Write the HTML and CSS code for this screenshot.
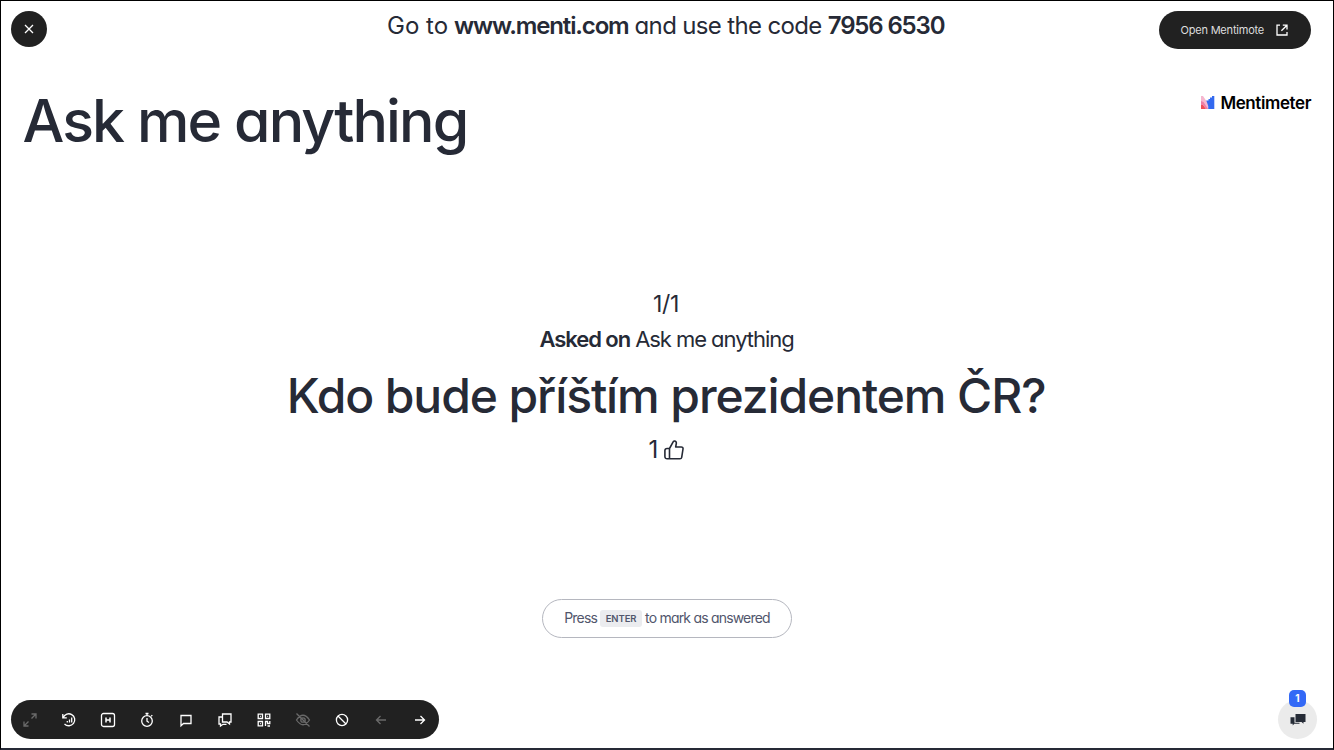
FILE: index.html
```html
<!DOCTYPE html>
<html lang="en">
<head>
<meta charset="utf-8">
<title>Ask me anything</title>
<link rel="stylesheet" href="styles.css">
</head>
<body>
<div class="screen">
  <header class="top">
    <button class="close" aria-label="Close"><svg width="10" height="10" viewBox="0 0 10 10"><path d="M1 1l8 8M9 1l-8 8"/></svg></button>
    <p class="join"><span>Go to</span><b class="site">www.menti.com</b><span class="use">and use the code</span><b class="code">7956 6530</b></p>
    <button class="mote"><span>Open Mentimote</span><svg width="12" height="12" viewBox="0 0 12 12"><path d="M4 1.200H1v9.800h10V8M6.800 1.200H11v4.200M11 1.200L5.400 6.800"/></svg></button>
  </header>
  <div class="heading">
    <h1>Ask me anything</h1>
    <div class="brand">
      <svg width="14" height="13" viewBox="0 0 14 13"><path fill="#f6b7cf" d="M0 0h2l3 4.500 2 2v6.500H0z"/><path fill="#ef4d55" d="M0 8.500l2 .5 3 4H0z"/><path fill="#ee7fa5" d="M0 5l2.500 1L7 13H5L2 9 0 8.500z"/><path fill="#3369ef" d="M13.300 0H11v1.500H9V3H7.500v1.500H5.200l1 2.500 1 3v3h6.100z"/></svg>
      <span>Mentimeter</span>
    </div>
  </div>
  <main class="question">
    <p class="count">1/1</p>
    <p class="asked"><b>Asked on</b><span>Ask me anything</span></p>
    <h2>Kdo bude příštím prezidentem ČR?</h2>
    <p class="votes"><span>1</span><svg width="20" height="20" viewBox="0 0 20 20"><path d="M5.500 8.500L9 2.200C9.300 1.200 9.800 .9 10.500 1c1.300.2 2 1.100 1.800 2.300L11.700 7h5.600c1.200 0 1.900.9 1.700 2l-1.300 8.300c-.2 1-.8 1.500-1.700 1.500H3.200C1.800 18.800.9 18 .9 16.600v-6C.9 9.200 1.800 8.500 3.200 8.500zM5.500 8.500v10.300"/></svg></p>
  </main>
  <div class="hint"><span>Press</span><kbd>ENTER</kbd><span>to mark as answered</span></div>
  <footer class="bottom">
    <nav class="tools">
      <svg class="off" viewBox="0 0 16 16"><path d="M9.500 6.500L14 2M9.500 2H14v4.500M6.500 9.500L2 14M2 9.500V14h4.500"/></svg>
      <svg viewBox="0 0 16 16"><path d="M2.200 5.500A6 6 0 1 1 3.500 12M1.800 2v3.800h4M6.300 10.500V9M8.500 10.500V7.500M10.700 10.500V5.500"/></svg>
      <svg viewBox="0 0 16 16"><rect x="1.500" y="1.500" width="13" height="13" rx="2"/><path stroke-width="1.500" d="M6 5.500v5M10 5.500v5M6 8h4"/></svg>
      <svg viewBox="0 0 16 16"><circle cx="8" cy="9" r="5.300"/><path d="M8 6v3.200l2 1.300M6.500 1.500h3M8 1.500v2M12.200 4.200l1.100-1.100"/></svg>
      <svg viewBox="0 0 16 16"><path d="M3 3.500h10v8H5.500L3 13.700z"/></svg>
      <svg viewBox="0 0 16 16"><path d="M5.500 2H14v8h-1.500v2L10 10H5.500zM5.500 5H2v7h1.500v2L6 12.300h3.500"/></svg>
      <svg viewBox="0 0 16 16"><path d="M2.200 2.200h4.300v4.300H2.200zM9.500 2.200h4.300v4.300H9.500zM2.200 9.500h4.300v4.300H2.200zM4 4.300h.8M11.300 4.300h.8M4 11.700h.8M9.500 14V9.500h2v2h2.300V9M11.500 14h2.500"/></svg>
      <svg class="off" viewBox="0 0 16 16"><path d="M1.500 8Q8-1.500 14.500 8 8 17.500 1.500 8zM1.500 1.500l13 13"/><circle cx="8" cy="8" r="2.200"/></svg>
      <svg viewBox="0 0 16 16"><circle cx="8" cy="8" r="5.600"/><path d="M4 4l8 8"/></svg>
      <svg class="off" viewBox="0 0 16 16"><path d="M13 8H3.500M7.500 4l-4 4 4 4"/></svg>
      <svg viewBox="0 0 16 16"><path d="M3 8h9.500M8.500 4l4 4-4 4"/></svg>
    </nav>
    <button class="chat" aria-label="Comments"><svg width="16" height="14" viewBox="0 0 16 14"><path d="M5.500 1H15.500v8h-2v1.800L11.500 9h-6zM.5 4.200h4v5.500h5v1H4.300L2.700 12.500V10.700H.5z"/></svg><span class="badge">1</span></button>
  </footer>
</div>
</body>
</html>
```
FILE: styles.css
```css
* { box-sizing: border-box; margin: 0; padding: 0; }
body { font-family: Inter, "Liberation Sans", sans-serif; font-feature-settings: "cv11"; color: #262a36; background: #fff; }
svg { display: block; flex: none; fill: none; stroke: currentColor; stroke-width: 1.3; }
button { border: 0; font: inherit; font-feature-settings: inherit; }
b { font-weight: 600; }
h1, h2 { font-weight: 500; }
.screen { width: 1334px; height: 750px; border: 1px solid #000; border-bottom: 2px solid #262a36; display: flex; flex-direction: column; overflow: hidden; }
.top { display: flex; justify-content: space-between; align-items: flex-start; padding: 10px 21.5px 0 10.4px; height: 86px; }
.close { width: 36px; height: 36px; border-radius: 50%; background: #212121; color: #fff; display: grid; place-items: center; }
.join { display: flex; gap: 6px; font-size: 24px; font-weight: 400; line-height: 30px; white-space: nowrap; margin-left: 125px; }
.site { letter-spacing: -1.15px; }
.use { letter-spacing: -0.65px; }
.code { letter-spacing: -1.15px; }
.mote { width: 152.5px; height: 38px; border-radius: 19px; background: #212121; color: #ddd; display: flex; align-items: center; justify-content: space-between; padding: 0 23.5px 0 21.5px; font-size: 11px; letter-spacing: -0.2px; white-space: nowrap; }
.mote svg { color: #fff; }
.heading { display: flex; justify-content: space-between; padding: 0 22px 0 21.5px; height: 204px; }
h1 { font-size: 59px; line-height: 67px; letter-spacing: -1.9px; white-space: nowrap; }
.brand { display: flex; align-items: center; height: 31px; gap: 5px; font-size: 17px; font-weight: 600; color: #000; letter-spacing: -0.4px; }
.brand svg { stroke: none; }
.question { height: 308px; display: flex; flex-direction: column; align-items: center; white-space: nowrap; }
.count { font-size: 23px; font-weight: 400; line-height: 26px; letter-spacing: -0.4px; margin-right: 2px; }
.asked { display: flex; gap: 5px; font-size: 22px; font-weight: 400; line-height: 30px; margin: 7px 1px 0 0; letter-spacing: -1.05px; }
h2 { font-size: 48px; line-height: 60px; margin: 12px 2px 0 0; letter-spacing: -1.1px; }
.votes { display: flex; align-items: center; gap: 6px; font-size: 24px; font-weight: 400; line-height: 30px; margin: 9px 1px 0 0; }
.votes svg { stroke-width: 1.6; stroke-linejoin: round; }
.hint { align-self: center; width: 250px; height: 39px; border: 1px solid #b5b7bf; border-radius: 20px; display: flex; align-items: center; justify-content: center; gap: 3px; font-size: 14px; line-height: 16px; padding-bottom: 1px; letter-spacing: -0.8px; color: #51566c; white-space: nowrap; }
kbd { width: 42px; height: 17px; margin-top: 1px; border-radius: 3px; background: #ebecef; font: 600 9.5px/18px Inter, sans-serif; letter-spacing: -0.1px; text-align: center; }
.bottom { display: flex; justify-content: space-between; align-items: flex-start; margin-top: 62px; padding: 0 16px 0 10.4px; }
.tools { width: 428px; height: 39px; border-radius: 20px; background: #212121; color: #fff; display: flex; align-items: center; justify-content: space-between; padding: 0 11px; }
.tools svg { width: 16px; height: 16px; }
.tools .off { color: #6a6a6a; }
.chat { position: relative; width: 39px; height: 39px; border-radius: 50%; background: #ebebeb; color: #252b36; display: grid; place-items: center; }
.chat svg { fill: currentColor; stroke: none; }
.badge { position: absolute; left: 11px; top: -10px; width: 17px; height: 17px; border-radius: 5px; background: #3369f6; color: #fff; font-size: 10px; font-weight: 700; line-height: 17px; text-align: center; }
```
